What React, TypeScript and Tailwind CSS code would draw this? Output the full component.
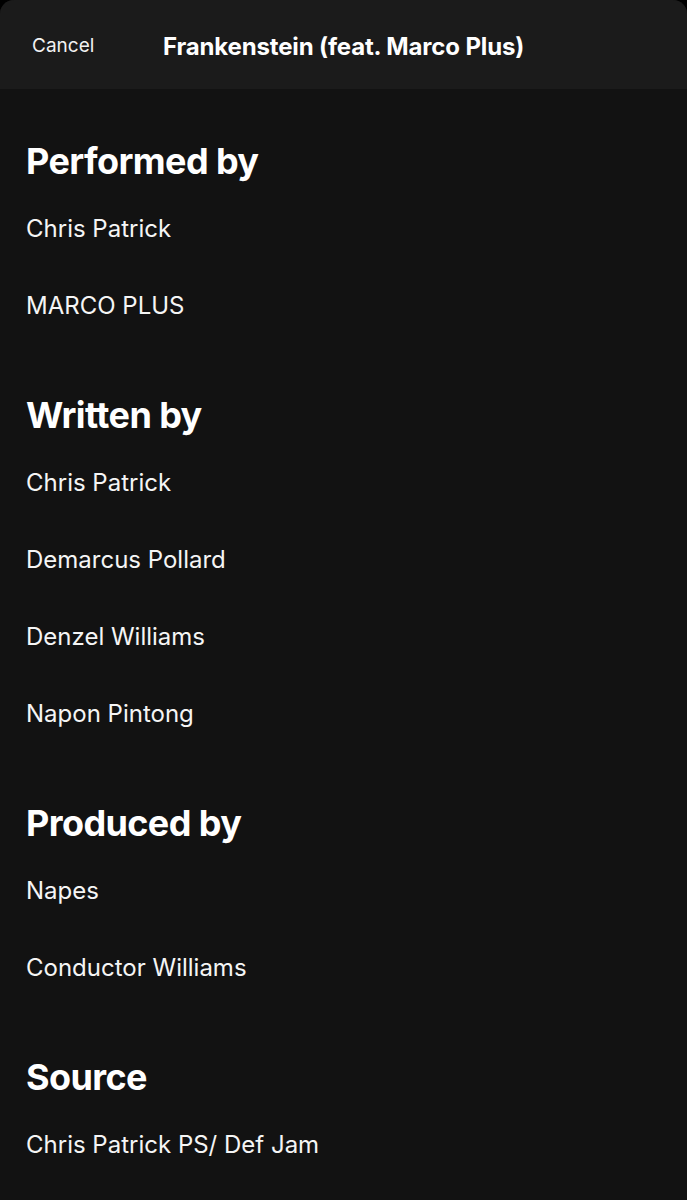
export default function App() {
  const sections: { title: string; items: string[] }[] = [
    { title: "Performed by", items: ["Chris Patrick", "MARCO PLUS"] },
    { title: "Written by", items: ["Chris Patrick", "Demarcus Pollard", "Denzel Williams", "Napon Pintong"] },
    { title: "Produced by", items: ["Napes", "Conductor Williams"] },
    { title: "Source", items: ["Chris Patrick PS/ Def Jam"] },
  ];
  return (
    <div className="h-[1200px] w-[687px] bg-black overflow-hidden" style={{ fontFamily: "Inter, 'Noto Sans', sans-serif" }}>
      <div className="h-full rounded-t-[14px] bg-[#121212] overflow-hidden">
        <div className="h-[89px] bg-[#1b1b1b] flex items-center pt-[4px]">
          <span className="ml-[32px] w-[131px] text-[19px] text-[#f2f2f2]">Cancel</span>
          <span className="text-[24px] font-bold text-white tracking-[-0.15px]">Frankenstein (feat. Marco Plus)</span>
        </div>
        <div className="px-[26px] pt-[50px]">
          {sections.map((s, i) => (
            <div key={s.title} className={i > 0 ? "mt-[49px]" : ""}>
              <h2 className="h-[44px] leading-[44px] text-[36px] font-bold text-white tracking-[-0.6px]">{s.title}</h2>
              <div className="mt-[7px]">
                {s.items.map((it, j) => (
                  <div key={j} className="h-[77px] flex items-center text-[24px] text-[#f5f5f5]">{it}</div>
                ))}
              </div>
            </div>
          ))}
        </div>
      </div>
    </div>
  );
}
